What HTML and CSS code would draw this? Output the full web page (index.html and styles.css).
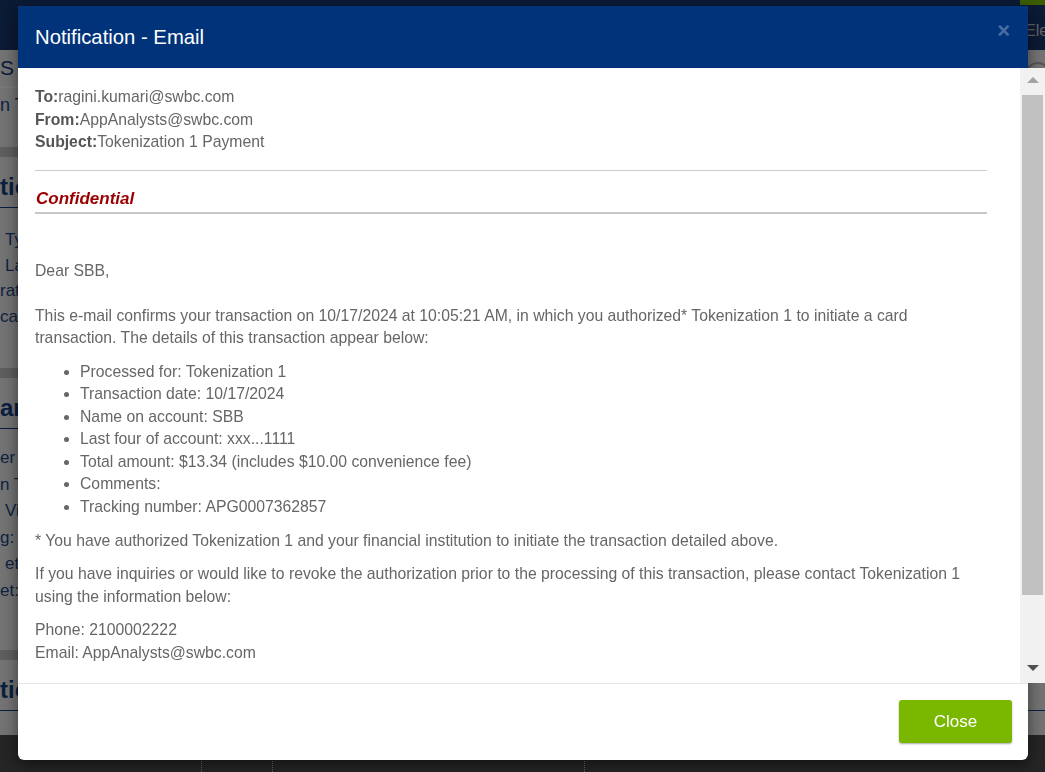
FILE: index.html
```html
<!DOCTYPE html>
<html>
<head>
<meta charset="utf-8">
<title>Notification - Email</title>
<link rel="stylesheet" href="styles.css">
</head>
<body>
<div class="page">
  <div class="topbar">
    <div class="tb-user">
      <div class="tb-tab"></div>
      <div class="tb-text">Ele</div>
    </div>
  </div>
  <div class="crumb">
    <span class="crumb-text frag">S B</span>
    <span class="crumb-icon"></span>
  </div>
  <div class="subrow"><span class="frag">n T</span></div>
  <div class="gap g22"></div>
  <div class="band"></div>
  <div class="panel">
    <div class="ph"><span class="frag">tio</span></div>
    <div class="pr ind"><span class="frag">Ty</span></div>
    <div class="pr ind"><span class="frag">La</span></div>
    <div class="pr"><span class="frag">rat</span></div>
    <div class="pr"><span class="frag">cat</span></div>
  </div>
  <div class="band b2"></div>
  <div class="panel p2">
    <div class="ph"><span class="frag">an</span></div>
    <div class="pr"><span class="frag">er N</span></div>
    <div class="pr"><span class="frag">n T</span></div>
    <div class="pr ind"><span class="frag">Vi</span></div>
    <div class="pr"><span class="frag">g:</span></div>
    <div class="pr ind"><span class="frag">et</span></div>
    <div class="pr"><span class="frag">et:</span></div>
  </div>
  <div class="band b3"></div>
  <div class="panel">
    <div class="ph"><span class="frag">tio</span></div>
  </div>
  <div class="footbar">
    <div class="fcell c1"></div>
    <div class="fcell c2"></div>
    <div class="fcell c3"></div>
    <div class="fcell c4"></div>
  </div>
</div>
<div class="overlay"></div>
<div class="modal">
  <div class="modal-header">
    <div class="modal-title">Notification - Email</div>
    <div class="modal-close">&times;</div>
  </div>
  <div class="modal-body">
    <div class="mb-content">
      <div class="meta"><b>To:</b>ragini.kumari@swbc.com</div>
      <div class="meta"><b>From:</b>AppAnalysts@swbc.com</div>
      <div class="meta"><b>Subject:</b>Tokenization 1 Payment</div>
      <div class="rule"></div>
      <div class="conf">Confidential</div>
      <p class="dear">Dear SBB,</p>
      <p class="first">This e-mail confirms your transaction on 10/17/2024 at 10:05:21 AM, in which you authorized* Tokenization 1 to initiate a card transaction. The details of this transaction appear below:</p>
      <ul>
        <li>Processed for: Tokenization 1</li>
        <li>Transaction date: 10/17/2024</li>
        <li>Name on account: SBB</li>
        <li>Last four of account: xxx...1111</li>
        <li>Total amount: $13.34 (includes $10.00 convenience fee)</li>
        <li>Comments:</li>
        <li>Tracking number: APG0007362857</li>
      </ul>
      <p>* You have authorized Tokenization 1 and your financial institution to initiate the transaction detailed above.</p>
      <p>If you have inquiries or would like to revoke the authorization prior to the processing of this transaction, please contact Tokenization 1 using the information below:</p>
      <p>Phone: 2100002222<br>Email: AppAnalysts@swbc.com</p>
    </div>
    <div class="sb">
      <div class="sb-up"><span class="arr-up"></span></div>
      <div class="sb-thumb"></div>
      <div class="sb-space"></div>
      <div class="sb-down"><span class="arr-down"></span></div>
    </div>
  </div>
  <div class="modal-footer">
    <button class="btn-close">Close</button>
  </div>
</div>
</body>
</html>
```
FILE: styles.css
```css
html, body {
  margin: 0;
  padding: 0;
}
body {
  width: 1045px;
  height: 772px;
  overflow: hidden;
  font-family: "Liberation Sans", Arial, sans-serif;
}
.page {
  height: 772px;
  display: flex;
  flex-direction: column;
  background: #e6e6e6;
  color: #1a4688;
  overflow: hidden;
}
.frag {
  display: inline-block;
  max-width: 18px;
  overflow: hidden;
  white-space: nowrap;
  vertical-align: top;
}
.ind .frag {
  max-width: 13px;
}
.topbar {
  height: 50px;
  flex: none;
  background: #16346a;
  display: flex;
  justify-content: flex-end;
  align-items: flex-start;
}
.tb-user {
  width: 25px;
  display: flex;
  flex-direction: column;
  overflow: hidden;
}
.tb-tab {
  height: 5px;
  background: #78b800;
}
.tb-text {
  margin-top: 17px;
  padding-left: 5px;
  color: #c8c8c8;
  font-size: 16px;
  white-space: nowrap;
}
.crumb {
  height: 36px;
  flex: none;
  display: flex;
  justify-content: space-between;
  align-items: flex-start;
  border-bottom: 2px solid #f2f2f2;
}
.crumb-text {
  font-size: 21px;
  line-height: 36px;
  color: #143a72;
}
.crumb-icon {
  width: 22px;
  height: 22px;
  margin-top: 12px;
  margin-right: -6px;
  border: 2px solid #aaaaaa;
  border-radius: 50%;
}
.subrow {
  height: 37px;
  flex: none;
  font-size: 18px;
  line-height: 34px;
}
.g22 {
  height: 22px;
  flex: none;
}
.band {
  height: 10px;
  flex: none;
  background: #bcbcbc;
}
.b2 {
  margin-top: 39px;
}
.b3 {
  margin-top: 46px;
}
.panel {
  flex: none;
  display: flex;
  flex-direction: column;
}
.ph {
  height: 40px;
  margin-top: 10px;
  font-size: 24px;
  font-weight: bold;
  line-height: 40px;
  color: #123f80;
  border-bottom: 1px solid #123f80;
}
.pr {
  height: 25.5px;
  font-size: 17px;
  line-height: 25.5px;
}
.panel .ph + .pr {
  margin-top: 19px;
}
.p2 .pr {
  height: 26.5px;
  line-height: 26.5px;
}
.p2 .ph + .pr {
  margin-top: 16px;
}
.ind {
  padding-left: 5px;
}
.footbar {
  margin-top: auto;
  height: 37px;
  flex: none;
  background: #4a4a4a;
  display: flex;
}
.fcell {
  height: 100%;
}
.c1 { width: 201px; }
.c2 { width: 70px; border-left: 1px dotted #d0d0d0; }
.c3 { width: 311px; border-left: 1px dotted #d0d0d0; }
.c4 { flex: 1; border-left: 1px dotted #d0d0d0; }

.overlay {
  position: fixed;
  left: 0;
  top: 0;
  right: 0;
  bottom: 0;
  background: rgba(0, 0, 0, 0.5);
}

.modal {
  position: fixed;
  left: 18px;
  top: 6px;
  width: 1010px;
  background: #ffffff;
  border-radius: 4px 4px 6px 6px;
  box-shadow: 0 5px 15px rgba(0, 0, 0, 0.5);
  display: flex;
  flex-direction: column;
}
.modal-header {
  height: 62px;
  background: #01337a;
  display: flex;
  align-items: center;
  justify-content: space-between;
  padding: 0 18px 0 17px;
  border-radius: 3px 3px 0 0;
}
.modal-title {
  color: #ffffff;
  font-size: 20.3px;
}
.modal-close {
  color: rgba(255, 255, 255, 0.3);
  font-size: 22px;
  font-weight: bold;
  line-height: 1;
  margin-top: -12px;
}
.modal-body {
  height: 615px;
  margin-right: -17px;
  display: flex;
  overflow: hidden;
}
.mb-content {
  flex: 1;
  padding: 18px 33px 0 17px;
  color: #666666;
  font-size: 15.75px;
  line-height: 22.5px;
  overflow: hidden;
}
.meta b {
  color: #555555;
}
.rule {
  margin-top: 16.5px;
  height: 1px;
  background: #cccccc;
}
.conf {
  margin-top: 17px;
  color: #9b0000;
  font-size: 17px;
  font-weight: bold;
  font-style: italic;
  line-height: 22px;
  padding: 0 0 2px 1px;
  border-bottom: 2px solid #c8c8c8;
}
p {
  margin: 0 0 11px 0;
}
.dear {
  margin-top: 45.5px;
  margin-bottom: 22.5px;
}
ul {
  margin: 0 0 11.5px 0;
  padding-left: 45px;
}
.sb {
  width: 25px;
  background: #f1f1f1;
  display: flex;
  flex-direction: column;
  align-items: center;
}
.sb-up {
  height: 27px;
  box-sizing: border-box;
  padding-top: 9px;
  display: flex;
  justify-content: center;
  align-items: flex-start;
}
.arr-up {
  width: 0;
  height: 0;
  border-left: 6px solid transparent;
  border-right: 6px solid transparent;
  border-bottom: 6px solid #a3a3a3;
}
.sb-thumb {
  width: 21px;
  height: 500px;
  background: #c1c1c1;
}
.sb-space {
  flex: 1;
}
.sb-down {
  height: 30px;
  display: flex;
  justify-content: center;
  align-items: center;
}
.arr-down {
  width: 0;
  height: 0;
  border-left: 6px solid transparent;
  border-right: 6px solid transparent;
  border-top: 6px solid #505050;
}
.modal-footer {
  border-top: 1px solid #e5e5e5;
  padding: 16px 16px 17px 16px;
  display: flex;
  justify-content: flex-end;
}
.btn-close {
  width: 113px;
  height: 43px;
  background: #7ab800;
  color: #ffffff;
  border: none;
  border-radius: 3px;
  font-family: "Liberation Sans", Arial, sans-serif;
  font-size: 17px;
  box-shadow: 0 1px 2px rgba(0, 0, 0, 0.35);
}
```
